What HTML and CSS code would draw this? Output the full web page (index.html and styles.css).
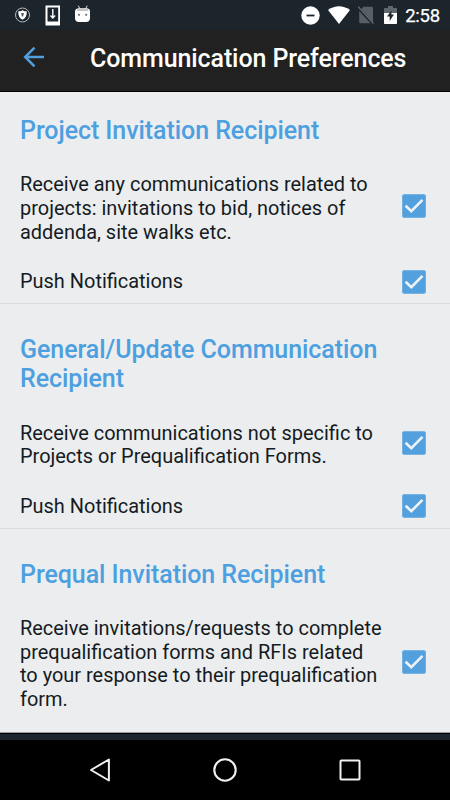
FILE: index.html
```html
<!DOCTYPE html>
<html lang="en">
<head>
<meta charset="utf-8">
<title>Communication Preferences</title>
<link rel="stylesheet" href="styles.css">
</head>
<body>
<svg class="defs" width="0" height="0">
  <symbol id="check" viewBox="0 0 24 24"><rect x=".2" y=".2" width="23.6" height="23.6" rx="1.8" fill="#53a0de"/><path d="M3.600 11.700 9.300 17.100 20.500 5.800" fill="none" stroke="#eff3f6" stroke-width="2.600"/></symbol>
</svg>
<div class="screen">
  <header class="status">
    <div class="status-left">
      <svg width="16" height="16" viewBox="0 0 16 16"><circle cx="7.500" cy="8" r="7" fill="none" stroke="#b5babd" stroke-width="1"/><path d="M7.500 3.300c1.400.9 2.800 1.100 4.300 1.100 0 4.300-1.300 6.900-4.300 8.300C4.500 11.300 3.200 8.700 3.200 4.400 4.700 4.400 6.100 4.200 7.500 3.300Z" fill="#fff"/><path d="M6.100 5.900h2.800l-.8 3.500H6.900Z" fill="#4d565b"/></svg>
      <svg width="16" height="21" viewBox="0 0 16 21"><path fill="#fff" fill-rule="evenodd" d="M.5.500h14.500v20H.5ZM2.500 2.500v14h10.700v-14Z"/><path d="M7.800 4v8.500M5.500 10.500 7.800 13l2.300-2.500" stroke="#fff" stroke-width="1.400" fill="none"/></svg>
      <svg class="droid" width="16" height="18" viewBox="0 0 16 18"><path d="M3.300.700 5 4M12.200.700 10.500 4" stroke="#ddd" stroke-width="1"/><path d="M0 6Q.5 3.300 4 3.300h7.500q3.200 0 3.500 2.700v7q0 4-4 4H4q-4 0-4-4Z" fill="#fff"/><path d="M2 4.900Q3 3.600 4.500 3.600h6.500Q12.500 3.600 13.500 4.900v1.200H2Z" fill="#c4c4c4"/><circle cx="4" cy="9.800" r="1.100" fill="#66717b"/><circle cx="11.200" cy="9.800" r="1.100" fill="#66717b"/></svg>
    </div>
    <div class="status-right">
      <svg width="19" height="19" viewBox="0 0 19 19"><circle cx="9.500" cy="9.500" r="9.200" fill="#fff"/><path d="M5.500 9.500h8" stroke="#1c252c" stroke-width="1.800"/></svg>
      <svg width="22" height="18" viewBox="0 0 22 18"><path d="M0 4Q11-3.500 22 4L11 18Z" fill="#fff"/></svg>
      <svg width="16" height="18" viewBox="0 0 16 18"><path d="M5.500.800h8.200q1.300 0 1.300 1.300v13.800q0 1.300-1.300 1.300H2.500q-1.300 0-1.300-1.300V5.200Z" fill="#596065"/><path d="M-.5 1 15 18" stroke="#1c252c" stroke-width="2.800"/><path d="M.2.700 15.500 17.500" stroke="#646a6e" stroke-width="1.300"/></svg>
      <svg width="13" height="18" viewBox="0 0 13 18"><path d="M4 0h5v2h3.300q.7 0 .7.700V7H0V2.700Q0 2 .7 2H4Z" fill="#60676c"/><path d="M0 7h13v10.300q0 .7-.7.700H.7q-.7 0-.7-.7Z" fill="#fff"/><path d="M7.400 4.500v4h2.500L5.700 15v-4.400H3Z" fill="#1c252c"/></svg>
      <span class="clock">2:58</span>
    </div>
  </header>
  <div class="toolbar">
    <svg class="back" width="22" height="22" viewBox="0 0 22 22"><path d="M21 11H2.500M11.500 1.700 2.200 11l9.300 9.300" fill="none" stroke="#509fdf" stroke-width="2.500"/></svg>
    <h1 class="title">Communication Preferences</h1>
  </div>
  <main class="content">
    <section class="group">
      <h2 class="heading">Project Invitation Recipient</h2>
      <div class="row"><p class="label">Receive any communications related to<br>projects: invitations to bid, notices of<br>addenda, site walks etc.</p><svg class="box"><use href="#check"/></svg></div>
      <div class="row push"><p class="label">Push Notifications</p><svg class="box"><use href="#check"/></svg></div>
    </section>
    <section class="group">
      <h2 class="heading">General/Update Communication<br>Recipient</h2>
      <div class="row"><p class="label">Receive communications not specific to<br>Projects or Prequalification Forms.</p><svg class="box"><use href="#check"/></svg></div>
      <div class="row push"><p class="label">Push Notifications</p><svg class="box"><use href="#check"/></svg></div>
    </section>
    <section class="group">
      <h2 class="heading">Prequal Invitation Recipient</h2>
      <div class="row"><p class="label">Receive invitations/requests to complete<br>prequalification forms and RFIs related<br>to your response to their prequalification<br>form.</p><svg class="box"><use href="#check"/></svg></div>
    </section>
  </main>
  <div class="strip"></div>
  <nav class="nav">
    <svg width="24" height="26" viewBox="0 0 24 26"><path d="M20.900 2.500v21L3 13Z" fill="none" stroke="#f0f0f0" stroke-width="2" stroke-linejoin="round"/></svg>
    <svg width="24" height="26" viewBox="0 0 24 26"><circle cx="12" cy="13" r="10.700" fill="none" stroke="#f0f0f0" stroke-width="2.100"/></svg>
    <svg width="24" height="26" viewBox="0 0 24 26"><rect x="2.500" y="3.500" width="19" height="19" rx=".8" fill="none" stroke="#f0f0f0" stroke-width="2"/></svg>
  </nav>
</div>
</body>
</html>
```
FILE: styles.css
```css
* { box-sizing: border-box; margin: 0; padding: 0; }
body { font-family: Roboto, sans-serif; width: 450px; height: 800px; overflow: hidden; background: #000; }
svg { display: block; flex: none; }
.defs { display: none; }
.screen { display: flex; flex-direction: column; height: 800px; }
.status { height: 30px; flex: none; display: flex; justify-content: space-between; align-items: center; padding: 0 10px 0 15px; background: #1c252c; }
.status-left { display: flex; align-items: center; gap: 14px; }
.droid { margin-bottom: 3px; }
.status-right { display: flex; align-items: center; gap: 8px; }
.status-right svg:nth-child(3) { margin-right: 2px; }
.clock { color: #fff; font-size: 18.500px; font-weight: 400; line-height: 20px; letter-spacing: -.2px; margin-top: 1px; -webkit-text-stroke: .25px #fff; }
.toolbar { height: 62px; flex: none; display: flex; align-items: center; padding: 0 0 7px 23px; background: #212121; border-bottom: 1px solid #000; }
.title { margin: 3px 0 0 45px; color: #fff; font-size: 25px; font-weight: 500; line-height: 30px; letter-spacing: -.1px; white-space: nowrap; }
.content { height: 641px; flex: none; background: #ecedef; border-bottom: 1px solid #999b9d; overflow: hidden; }
.group { padding: 31px 24px 8.800px 20px; border-bottom: 1px solid #d9dbdd; }
.group:first-child { padding-top: 24px; }
.group:last-child { border-bottom: 0; }
.heading { color: #4da0e0; font-size: 25px; font-weight: 500; line-height: 29.500px; letter-spacing: -.07px; white-space: nowrap; margin-bottom: 27.800px; }
.row { display: flex; align-items: center; justify-content: space-between; }
.push { margin-top: 26px; }
.label { color: #141b22; font-size: 19.960px; line-height: 23.700px; white-space: nowrap; }
.box { width: 24px; height: 24px; margin-top: -5.500px; }
.push .box { margin-top: -1.500px; }
.strip { height: 7px; flex: none; background: #1c252c; border-top: 1px solid #000; }
.nav { height: 60px; flex: none; background: #000; display: flex; align-items: center; justify-content: space-between; padding: 0 88px; }
```
